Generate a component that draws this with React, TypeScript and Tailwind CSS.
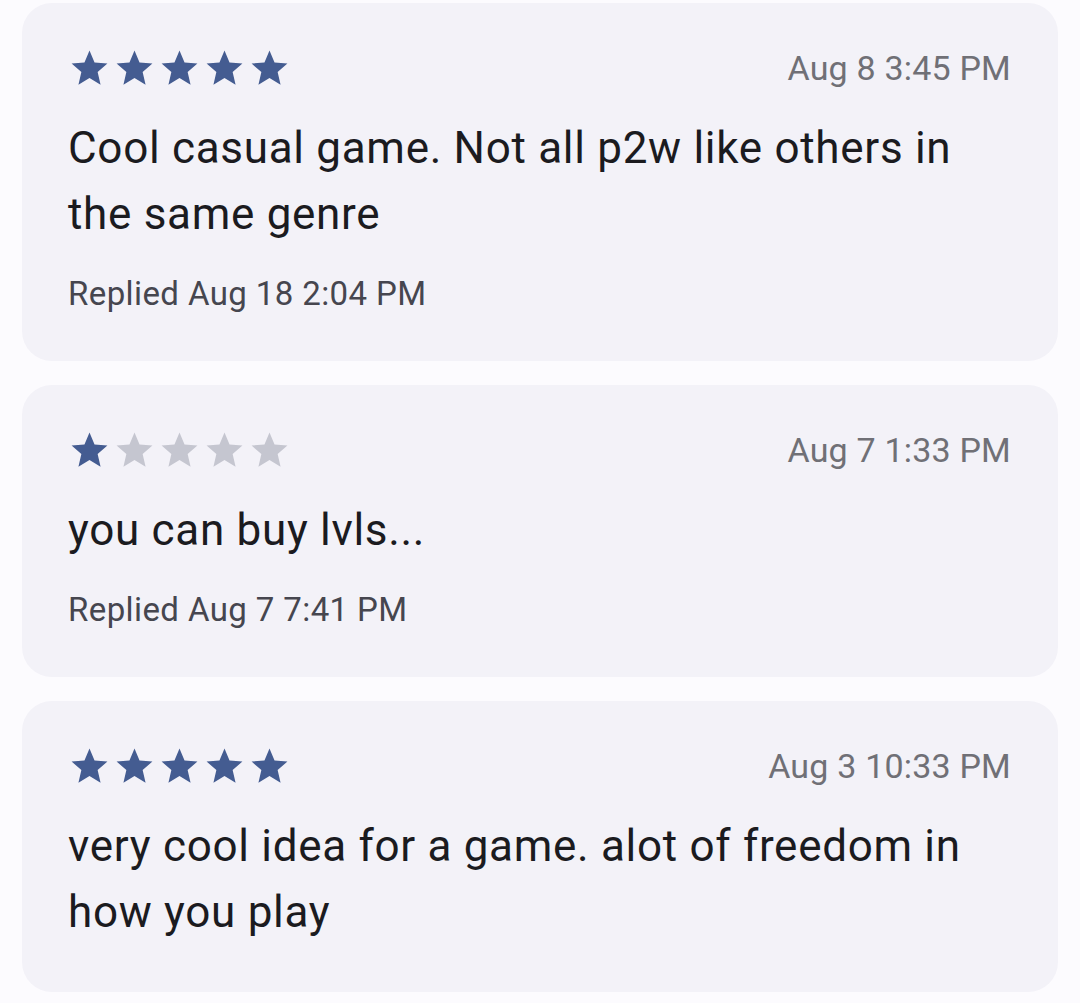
import React from 'react'

interface Review {
  rating: number
  date: string
  text: string
  replied?: string
}

const reviews: Review[] = [
  {
    rating: 5,
    date: 'Aug 8 3:45 PM',
    text: 'Cool casual game. Not all p2w like others in the same genre',
    replied: 'Replied Aug 18 2:04 PM'
  },
  {
    rating: 1,
    date: 'Aug 7 1:33 PM',
    text: 'you can buy lvls...',
    replied: 'Replied Aug 7 7:41 PM'
  },
  {
    rating: 5,
    date: 'Aug 3 10:33 PM',
    text: 'very cool idea for a game. alot of freedom in how you play'
  }
]

const Star: React.FC<{ filled: boolean }> = ({ filled }) => (
  <svg
    viewBox="0 0 24 24"
    className={filled ? 'w-[43px] h-[43px] fill-[#445c91]' : 'w-[43px] h-[43px] fill-[#c5c6d0]'}
  >
    <path d="M12 17.27L18.18 21l-1.64-7.03L22 9.24l-7.19-.61L12 2 9.19 8.63 2 9.24l5.46 4.73L5.82 21z" />
  </svg>
)

const ReviewCard: React.FC<{ review: Review }> = ({ review }) => (
  <div className="rounded-[30px] bg-[#f3f2f8] pt-[44px] pb-[47px] pl-[46px] pr-[47px]">
    <div className="flex items-center justify-between h-[43px]">
      <div className="flex gap-[2px]">
        {[1, 2, 3, 4, 5].map((i) => (
          <Star key={i} filled={i <= review.rating} />
        ))}
      </div>
      <span className="text-[34px] leading-[40px] tracking-[0.2px] text-[#707076] -mt-[2px]">
        {review.date}
      </span>
    </div>
    <p className="mt-[25px] text-[44px] leading-[66px] tracking-[0.7px] text-[#1b1b1f] pr-[20px]">
      {review.text}
    </p>
    {review.replied && (
      <p className="mt-[27px] text-[33px] leading-[40px] tracking-[0.4px] text-[#46464f]">
        {review.replied}
      </p>
    )}
  </div>
)

export default function App() {
  return (
    <div
      className="min-h-[1003px] bg-[#fcfbfe] px-[22px] pt-[3px] flex flex-col gap-[24px]"
      style={{ fontFamily: 'Roboto, "Open Sans", sans-serif' }}
    >
      {reviews.map((r, i) => (
        <ReviewCard key={i} review={r} />
      ))}
    </div>
  )
}
